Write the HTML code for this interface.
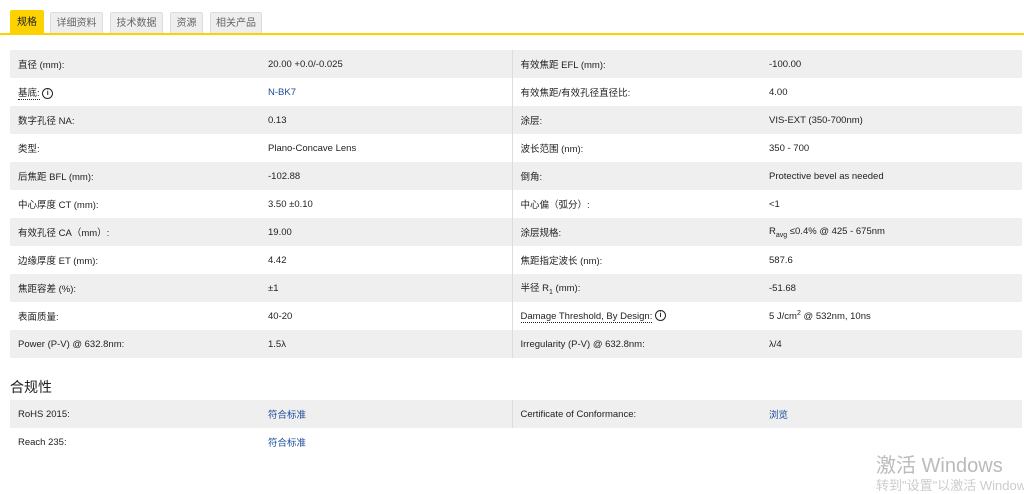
<!DOCTYPE html>
<html><head><meta charset="utf-8"><style>
body{margin:0;width:1024px;height:484px;background:#fff;font-family:"Liberation Sans","Noto Sans CJK SC",sans-serif;font-size:9.5px;color:#222;overflow:hidden;position:relative}
.tabs{position:absolute;left:10px;top:10px;height:23px}
.tab{position:absolute;top:2px;height:21px;line-height:21px;background:#eee;border:1px solid #ddd;border-bottom:none;color:#666;font-size:10px;text-align:center;box-sizing:border-box;border-radius:2px 2px 0 0}
.tab.on{background:#fcd200;border-color:#fcd200;color:#222;top:0;height:23px;line-height:23px}
.line{position:absolute;left:0;top:33px;width:1024px;height:2px;background:#fcd200}
table{position:absolute;border-collapse:collapse;table-layout:fixed}
td{height:28px;padding:0 0 0 8px;white-space:nowrap}
tr.g td{background:#efefef}
.div{border-left:1px solid #ddd}
a{color:#1a4a9a;text-decoration:none}
.u{border-bottom:1px dotted #222}
.i{display:inline-block;width:9px;height:9px;border:1.3px solid #222;border-radius:50%;font-size:7px;line-height:9px;text-align:center;font-weight:bold;vertical-align:middle;box-sizing:content-box}
h3{position:absolute;left:10px;top:377px;margin:0;font-size:14px;font-weight:normal}
.wm{position:absolute;left:876px;top:449px;font-size:20px;color:#bbb;white-space:nowrap}
.wm2{position:absolute;left:876px;top:475px;font-size:13px;color:#ccc;white-space:nowrap}
</style></head><body>
<div class="tabs">
<div class="tab on" style="left:0;width:34px">规格</div>
<div class="tab" style="left:40px;width:53px">详细资料</div>
<div class="tab" style="left:100px;width:53px">技术数据</div>
<div class="tab" style="left:160px;width:33px">资源</div>
<div class="tab" style="left:200px;width:52px">相关产品</div>
</div>
<div class="line"></div>
<table style="left:10px;top:50px;width:1012px">
<colgroup><col style="width:250px"><col style="width:252px"><col style="width:249px"><col style="width:261px"></colgroup>
<tr class="g"><td>直径 (mm):</td><td>20.00 +0.0/-0.025</td><td class="div">有效焦距 EFL (mm):</td><td>-100.00</td></tr>
<tr><td><span class="u">基底:</span> <span class="i">i</span></td><td><a>N-BK7</a></td><td class="div">有效焦距/有效孔径直径比:</td><td>4.00</td></tr>
<tr class="g"><td>数字孔径 NA:</td><td>0.13</td><td class="div">涂层:</td><td>VIS-EXT (350-700nm)</td></tr>
<tr><td>类型:</td><td>Plano-Concave Lens</td><td class="div">波长范围 (nm):</td><td>350 - 700</td></tr>
<tr class="g"><td>后焦距 BFL (mm):</td><td>-102.88</td><td class="div">倒角:</td><td>Protective bevel as needed</td></tr>
<tr><td>中心厚度 CT (mm):</td><td>3.50 ±0.10</td><td class="div">中心偏（弧分）:</td><td>&lt;1</td></tr>
<tr class="g"><td>有效孔径 CA（mm）:</td><td>19.00</td><td class="div">涂层规格:</td><td>R<sub style="font-size:7px">avg</sub> ≤0.4% @ 425 - 675nm</td></tr>
<tr><td>边缘厚度 ET (mm):</td><td>4.42</td><td class="div">焦距指定波长 (nm):</td><td>587.6</td></tr>
<tr class="g"><td>焦距容差 (%):</td><td>±1</td><td class="div">半径 R<sub style="font-size:7px">1</sub> (mm):</td><td>-51.68</td></tr>
<tr><td>表面质量:</td><td>40-20</td><td class="div"><span class="u">Damage Threshold, By Design:</span> <span class="i">i</span></td><td>5 J/cm<sup style="font-size:7px">2</sup> @ 532nm, 10ns</td></tr>
<tr class="g"><td>Power (P-V) @ 632.8nm:</td><td>1.5λ</td><td class="div">Irregularity (P-V) @ 632.8nm:</td><td>λ/4</td></tr>
</table>
<h3>合规性</h3>
<table style="left:10px;top:400px;width:1012px">
<colgroup><col style="width:250px"><col style="width:252px"><col style="width:249px"><col style="width:261px"></colgroup>
<tr class="g"><td style="height:27px">RoHS 2015:</td><td><a>符合标准</a></td><td class="div">Certificate of Conformance:</td><td><a>浏览</a></td></tr>
<tr><td style="height:27px">Reach 235:</td><td><a>符合标准</a></td><td></td><td></td></tr>
</table>
<div class="wm">激活 Windows</div>
<div class="wm2">转到"设置"以激活 Windows。</div>
</body></html>
